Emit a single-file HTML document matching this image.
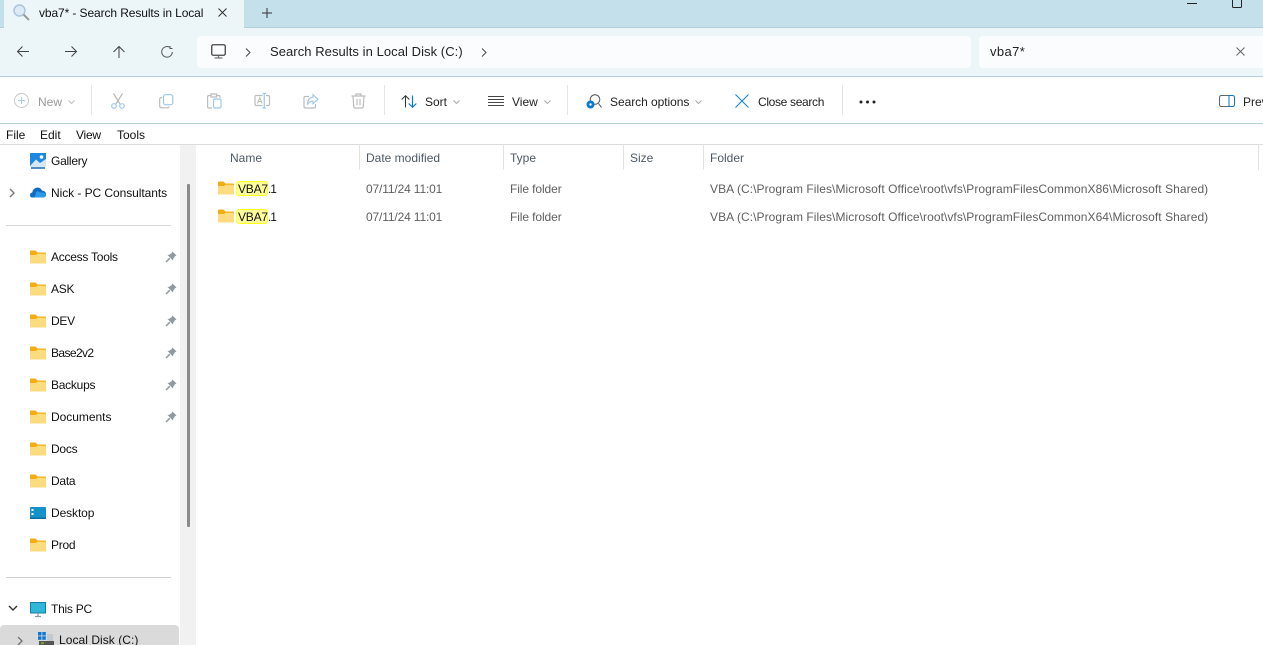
<!DOCTYPE html>
<html><head><meta charset="utf-8">
<style>
html,body{margin:0;padding:0;background:#fff;overflow:hidden}
#r{position:relative;width:1263px;height:645px;overflow:hidden;font-family:"Liberation Sans",sans-serif;font-size:12px;color:#111;background:#fff}
.a{position:absolute}
.t{position:absolute;white-space:nowrap;line-height:16px}
svg{position:absolute;overflow:visible}
.g{color:#5f5f5f}
.h{color:#4d5a66}
.l{position:absolute;background:#e3e3e3;width:1px}
.s{position:absolute;background:#e4e4e4;width:1px;height:30px;top:85px}
.hl{position:absolute;background:#fdfd9a;border:1px solid #ffff20;border-radius:3px;height:13px;width:30px}
.n{letter-spacing:-.25px}
.d{letter-spacing:-.15px}
.v{letter-spacing:-.2px}
.v span{letter-spacing:-1px}
.w{font-size:12px;letter-spacing:.065px}
</style></head><body>
<div id="r">
<svg width="0" height="0"><defs>
<symbol id="f" viewBox="0 0 16 14"><path d="M0 1.500Q0 .5 1 .5H5.500L7.500 2.500H15Q16 2.500 16 3.500V12.500Q16 13.500 15 13.500H1Q0 13.500 0 12.500Z" fill="#f2ac14"/><path d="M0 5H6L7.500 3.800H15Q16 3.800 16 4.800V12.500Q16 13.500 15 13.500H1Q0 13.500 0 12.500Z" fill="#fddc80"/></symbol>
<symbol id="p" viewBox="0 0 12 12"><path d="M7.500 .5L11.500 4.500L10 5.200L8.300 7.800L8 9.500L2.500 4L4.200 3.700L6.800 2Z" fill="#8f9aa2"/><path d="M4.800 7.200L1 11" stroke="#8f9aa2" stroke-width="1.500"/></symbol>
</defs></svg>

<div class="a" style="left:0;top:0;width:1263px;height:28px;background:#c3e0eb;border-bottom:1px solid #b0d0dc;box-sizing:border-box"></div>
<div class="a" style="left:0;top:28px;width:1263px;height:49px;background:#ecf5f8;border-bottom:1px solid #b6d0dd;box-sizing:border-box"></div>
<div class="a" style="left:4px;top:0;width:240px;height:28px;background:#ecf5f8"></div>
<svg style="left:13px;top:4px" width="17" height="17" viewBox="0 0 17 17"><circle cx="6.500" cy="6.500" r="5.500" fill="#dbeaf5" stroke="#a9c4da" stroke-width="1.400"/><path d="M10.500 10.500L16 16" stroke="#9a9a9a" stroke-width="2"/></svg>
<div class="t" style="left:39px;top:5px;letter-spacing:-.1px">vba7* - Search Results in Local</div>
<svg style="left:218px;top:8px" width="9" height="9"><path d="M.5 .5L8.500 8.500M8.500 .5L.5 8.500" stroke="#333" stroke-width="1"/></svg>
<svg style="left:262px;top:8px" width="10" height="10"><path d="M5 0V10M0 5H10" stroke="#333" stroke-width="1"/></svg>
<svg style="left:1187px;top:0" width="14" height="6"><path d="M0 3.500H10" stroke="#222" stroke-width="1"/></svg>
<svg style="left:1232px;top:0" width="11" height="8"><path d="M.5 -3H9.500V6.500Q9.500 7.500 8.500 7.500H1.500Q.5 7.500 .5 6.500Z" fill="none" stroke="#222"/></svg>

<svg style="left:17px;top:46px" width="12" height="11"><path d="M12 5.500H.5M5.500 .5L.5 5.500L5.500 10.500" fill="none" stroke="#444" stroke-width="1"/></svg>
<svg style="left:65px;top:46px" width="12" height="11"><path d="M0 5.500H11.500M6.500 .5L11.500 5.500L6.500 10.500" fill="none" stroke="#444" stroke-width="1"/></svg>
<svg style="left:113px;top:46px" width="12" height="12"><path d="M6 12V.5M.5 6L6 .5L11.500 6" fill="none" stroke="#444" stroke-width="1"/></svg>
<svg style="left:161px;top:46px" width="12" height="12"><path d="M8.500 1.200A5.300 5.300 0 1 0 11.300 6M9 0V2.500H11.500" fill="none" stroke="#555" stroke-width="1"/></svg>

<div class="a" style="left:197px;top:36px;width:774px;height:32px;background:#fafcfe;border-radius:4px"></div>
<svg style="left:211px;top:44px" width="15" height="15"><rect x=".75" y=".75" width="13.500" height="10.500" rx="1.500" fill="none" stroke="#444" stroke-width="1.300"/><path d="M7.500 11.500V13.500M3.500 14H11.500" stroke="#777" stroke-width="1.300"/></svg>
<svg style="left:245px;top:48px" width="6" height="9"><path d="M1 .5L5 4.500L1 8.500" fill="none" stroke="#444"/></svg>
<div class="t" style="left:270px;top:44px;font-size:13px;letter-spacing:.06px;color:#222">Search Results in Local Disk (C:)</div>
<svg style="left:481px;top:48px" width="6" height="9"><path d="M1 .5L5 4.500L1 8.500" fill="none" stroke="#444"/></svg>

<div class="a" style="left:979px;top:36px;width:284px;height:32px;background:#fafcfe;border-radius:4px 0 0 4px"></div>
<div class="t" style="left:990px;top:44px;font-size:13px;letter-spacing:.4px;color:#222">vba7*</div>
<svg style="left:1236px;top:47px" width="9" height="9"><path d="M.5 .5L8.500 8.500M8.500 .5L.5 8.500" stroke="#666"/></svg>

<!-- toolbar -->
<svg style="left:14px;top:93px" width="16" height="16"><circle cx="7.500" cy="7.500" r="7" fill="none" stroke="#c8c8c8"/><path d="M7.500 4V11M4 7.500H11" stroke="#a8cdec"/></svg>
<div class="t" style="left:38px;top:94px;color:#9a9a9a">New</div>
<svg style="left:68px;top:100px" width="7" height="4"><path d="M.5 .5L3.500 3.500L6.500 .5" fill="none" stroke="#c0c0c0"/></svg>
<div class="s" style="left:91px"></div>
<svg style="left:110px;top:93px" width="16" height="16"><path d="M3.500 .5L10 11M12.500 .5L6 11" stroke="#b8b8b8" fill="none" stroke-width="1.200"/><circle cx="4" cy="13" r="2.300" fill="none" stroke="#9cc8ee" stroke-width="1.200"/><circle cx="12" cy="13" r="2.300" fill="none" stroke="#9cc8ee" stroke-width="1.200"/></svg>
<svg style="left:159px;top:94px" width="15" height="15"><path d="M3 3.500H2.500Q.7 3.500 .7 5.300V12Q.7 13.800 2.500 13.800H8.500Q10 13.800 10 12.500" fill="none" stroke="#bcbcbc" stroke-width="1.200"/><rect x="4.500" y=".7" width="9.300" height="10" rx="2" fill="none" stroke="#9cc8ee" stroke-width="1.200"/></svg>
<svg style="left:207px;top:93px" width="15" height="16"><path d="M4 2.500H2Q.6 2.500 .6 4V13.500Q.6 15 2 15H5M9.500 2.500H11.500Q13 2.500 13 4V5M4 1H9.500V4H4Z" fill="none" stroke="#bcbcbc" stroke-width="1.200"/><rect x="6.500" y="6" width="7.500" height="9" rx="1.500" fill="none" stroke="#9cc8ee" stroke-width="1.200"/></svg>
<svg style="left:254px;top:93px" width="16" height="16"><path d="M8.500 2.500H2.500Q1 2.500 1 4V11Q1 12.500 2.500 12.500H8.500M12 2.500H14Q15.500 2.500 15.500 4V11Q15.500 12.500 14 12.500H12" fill="none" stroke="#bcbcbc" stroke-width="1.200"/><path d="M10.250 .5V15M8.500 .5H12M8.500 15H12" stroke="#9cc8ee" fill="none" stroke-width="1.200"/><path d="M3.500 10.500L5.800 4.500L8 10.500M4.300 8.500H7.300" fill="none" stroke="#b8b8b8"/></svg>
<svg style="left:303px;top:94px" width="16" height="15"><path d="M6 2.500H2.500Q1 2.500 1 4V12.500Q1 14 2.500 14H11Q12.500 14 12.500 12.500V10" fill="none" stroke="#bcbcbc" stroke-width="1.200"/><path d="M10 .7L15 5.200L10 9.700V7.200Q6 7.200 4.500 10.700Q4.500 3.700 10 3.200Z" fill="none" stroke="#9cc8ee" stroke-width="1.200"/></svg>
<svg style="left:351px;top:93px" width="15" height="16"><path d="M.5 3H14.500M5 3V1H10V3M2 3L2.800 14Q2.900 15 4 15H11Q12.100 15 12.200 14L13 3M6 6V12M9 6V12" fill="none" stroke="#bcbcbc" stroke-width="1.200"/></svg>
<div class="s" style="left:384px"></div>
<svg style="left:401px;top:95px" width="16" height="13"><path d="M4.500 12.500V.7M.7 4.500L4.500 .7L8.300 4.500" fill="none" stroke="#333"/><path d="M11.500 .5V12.300M7.700 8.500L11.500 12.300L15.300 8.500" fill="none" stroke="#0a78d4" stroke-width="1.200"/></svg>
<div class="t" style="left:425px;top:94px;color:#222">Sort</div>
<svg style="left:453px;top:100px" width="7" height="4"><path d="M.5 .5L3.500 3.500L6.500 .5" fill="none" stroke="#aaa"/></svg>
<svg style="left:488px;top:96px" width="16" height="11"><path d="M0 .5H16M0 3.500H16M0 6.500H16M0 9.500H16" stroke="#444"/></svg>
<div class="t" style="left:512px;top:94px;color:#222">View</div>
<svg style="left:544px;top:100px" width="7" height="4"><path d="M.5 .5L3.500 3.500L6.500 .5" fill="none" stroke="#aaa"/></svg>
<div class="s" style="left:567px"></div>
<svg style="left:586px;top:94px" width="16" height="15"><circle cx="9" cy="5.500" r="4.800" fill="none" stroke="#555"/><path d="M12.500 9.500L15.500 13.500" stroke="#555"/><circle cx="4.500" cy="10.500" r="4" fill="#0a78d4"/><circle cx="4.500" cy="10.500" r="1.200" fill="#fff"/></svg>
<div class="t" style="left:610px;top:94px;color:#222;letter-spacing:-.05px">Search options</div>
<svg style="left:695px;top:100px" width="7" height="4"><path d="M.5 .5L3.500 3.500L6.500 .5" fill="none" stroke="#aaa"/></svg>
<svg style="left:735px;top:94px" width="14" height="14"><path d="M.5 .5L13.500 13.500M13.500 .5L.5 13.500" stroke="#1a84d8" stroke-width="1.100"/></svg>
<div class="t" style="left:758px;top:94px;color:#222;letter-spacing:-.33px">Close search</div>
<div class="s" style="left:842px"></div>
<svg style="left:859px;top:100px" width="17" height="4"><circle cx="2" cy="2" r="1.500" fill="#222"/><circle cx="8.500" cy="2" r="1.500" fill="#222"/><circle cx="15" cy="2" r="1.500" fill="#222"/></svg>
<svg style="left:1219px;top:95px" width="16" height="13"><path d="M10 .5H2.500Q.5 .5 .5 2.500V9.500Q.5 11.500 2.500 11.500H10" fill="none" stroke="#666"/><path d="M10 .5V11.500M10 .5H13.500Q15.500 .5 15.500 2.500V9.500Q15.500 11.500 13.500 11.500H10" fill="none" stroke="#0a78d4"/></svg>
<div class="t" style="left:1243px;top:94px;color:#222">Preview</div>

<div class="a" style="left:0;top:123px;width:1263px;height:1px;background:#b9cfd8"></div>
<div class="t" style="left:6px;top:127px">File</div>
<div class="t" style="left:40px;top:127px">Edit</div>
<div class="t n" style="left:76px;top:127px">View</div>
<div class="t" style="left:117px;top:127px">Tools</div>
<div class="a" style="left:0;top:144px;width:1263px;height:1px;background:#dcdcdc"></div>

<!-- sidebar -->
<div class="a" style="left:180px;top:145px;width:16px;height:500px;background:#f1f1f1"></div>
<div class="a" style="left:187px;top:184px;width:3px;height:343px;background:#8a8a8a;border-radius:1px"></div>

<svg style="left:30px;top:153px" width="16" height="16"><path d="M0 0H16V13H0Z" fill="#1e88e0"/><path d="M0 13L6 6.500L10 10L16 6V14H0Z" fill="#d4e8f8"/><circle cx="11.500" cy="4" r="1.800" fill="#fff"/><path d="M1 15H15" stroke="#1569b5" stroke-width="1.500"/></svg>
<div class="t n" style="left:51px;top:153px">Gallery</div>
<svg style="left:9px;top:188px" width="7" height="10"><path d="M1 1L5 5L1 9" fill="none" stroke="#777" stroke-width="1.400"/></svg>
<svg style="left:30px;top:186px" width="16" height="12"><path d="M1.500 11.500Q0 11 0 9Q0 7 2.200 6.500Q3 2 7.500 1.500Q10.500 1.500 12 4.500Q16 5 16 8.500Q16 11.500 13 11.500Z" fill="#0f6cc4"/><path d="M6 6Q8 4.500 10 6.500Q14 6 15.500 8.500Q16 11.500 13 11.500H4Q6 9 6 6Z" fill="#2a9aea"/></svg>
<div class="t" style="left:51px;top:185px;letter-spacing:-.06px">Nick - PC Consultants</div>
<div class="a" style="left:6px;top:225px;width:165px;height:1px;background:#d8d8d8"></div>

<svg style="left:30px;top:250px" width="16" height="14"><use href="#f"/></svg><div class="t n" style="left:51px;top:249px">Access Tools</div><svg style="left:165px;top:251px" width="12" height="12"><use href="#p"/></svg>
<svg style="left:30px;top:282px" width="16" height="14"><use href="#f"/></svg><div class="t n" style="left:51px;top:281px">ASK</div><svg style="left:165px;top:283px" width="12" height="12"><use href="#p"/></svg>
<svg style="left:30px;top:314px" width="16" height="14"><use href="#f"/></svg><div class="t n" style="left:51px;top:313px">DEV</div><svg style="left:165px;top:315px" width="12" height="12"><use href="#p"/></svg>
<svg style="left:30px;top:346px" width="16" height="14"><use href="#f"/></svg><div class="t" style="left:51px;top:345px;letter-spacing:-.6px">Base2v2</div><svg style="left:165px;top:347px" width="12" height="12"><use href="#p"/></svg>
<svg style="left:30px;top:378px" width="16" height="14"><use href="#f"/></svg><div class="t n" style="left:51px;top:377px">Backups</div><svg style="left:165px;top:379px" width="12" height="12"><use href="#p"/></svg>
<svg style="left:30px;top:410px" width="16" height="14"><use href="#f"/></svg><div class="t" style="left:51px;top:409px;letter-spacing:-.03px">Documents</div><svg style="left:165px;top:411px" width="12" height="12"><use href="#p"/></svg>
<svg style="left:30px;top:442px" width="16" height="14"><use href="#f"/></svg><div class="t n" style="left:51px;top:441px">Docs</div>
<svg style="left:30px;top:474px" width="16" height="14"><use href="#f"/></svg><div class="t n" style="left:51px;top:473px">Data</div>
<svg style="left:30px;top:507px" width="16" height="12"><rect width="16" height="12" rx="1" fill="#1491c8"/><rect y="10.500" width="16" height="1.500" fill="#0b6f9c"/><rect x="1.500" y="2" width="2" height="2" fill="#fff"/><rect x="1.500" y="6" width="2" height="2" fill="#fff"/></svg>
<div class="t" style="left:51px;top:505px;letter-spacing:-.1px">Desktop</div>
<svg style="left:30px;top:538px" width="16" height="14"><use href="#f"/></svg><div class="t n" style="left:51px;top:537px">Prod</div>
<div class="a" style="left:6px;top:577px;width:165px;height:1px;background:#d0d0d0"></div>

<svg style="left:8px;top:605px" width="10" height="7"><path d="M1 1L5 5L9 1" fill="none" stroke="#333" stroke-width="1.400"/></svg>
<svg style="left:30px;top:602px" width="16" height="15"><rect x=".5" y=".5" width="15" height="10.500" fill="#2fb6d8" stroke="#157f9e"/><path d="M8 11V14M5 14.500H11" stroke="#8a9aa2" stroke-width="1.300"/></svg>
<div class="t n" style="left:51px;top:601px">This PC</div>

<div class="a" style="left:0;top:625px;width:179px;height:20px;background:#dadada;border-radius:4px 4px 0 0"></div>
<svg style="left:17px;top:636px" width="7" height="10"><path d="M1 1L5 5L1 9" fill="none" stroke="#777" stroke-width="1.400"/></svg>
<svg style="left:38px;top:632px" width="16" height="13"><rect width="3.500" height="3.500" fill="#0a78d4"/><rect x="4.300" width="3.500" height="3.500" fill="#0a78d4"/><rect y="4.300" width="3.500" height="3.500" fill="#0a78d4"/><rect x="4.300" y="4.300" width="3.500" height="3.500" fill="#0a78d4"/><rect x="9" y="2" width="6" height="7" fill="#c2c9cf"/><rect x="1" y="9" width="15" height="4" fill="#555"/><rect x="3" y="10.500" width="3" height="1.200" fill="#7ed321"/></svg>
<div class="t" style="left:59px;top:632px;letter-spacing:.05px">Local Disk (C:)</div>

<!-- header -->
<div class="t h" style="left:230px;top:150px">Name</div>
<div class="t h" style="left:366px;top:150px">Date modified</div>
<div class="t h" style="left:510px;top:150px">Type</div>
<div class="t h" style="left:630px;top:150px">Size</div>
<div class="t h" style="left:710px;top:150px">Folder</div>
<div class="l" style="left:359px;top:145px;height:25px"></div>
<div class="l" style="left:503px;top:145px;height:25px"></div>
<div class="l" style="left:623px;top:145px;height:25px"></div>
<div class="l" style="left:703px;top:145px;height:25px"></div>
<div class="l" style="left:1258px;top:145px;height:25px"></div>

<!-- rows -->
<svg style="left:218px;top:181px" width="16" height="14"><use href="#f"/></svg>
<div class="hl" style="left:236px;top:181px"></div>
<div class="t v" style="left:238px;top:181px;color:#111">VBA7<span>.1</span></div>
<div class="t g d" style="left:366px;top:181px">07/11/24 11:01</div>
<div class="t g" style="left:510px;top:181px;letter-spacing:-.1px">File folder</div>
<div class="t g w" style="left:710px;top:181px">VBA (C:\Program Files\Microsoft Office\root\vfs\ProgramFilesCommonX86\Microsoft Shared)</div>

<svg style="left:218px;top:209px" width="16" height="14"><use href="#f"/></svg>
<div class="hl" style="left:236px;top:209px"></div>
<div class="t v" style="left:238px;top:209px;color:#111">VBA7<span>.1</span></div>
<div class="t g d" style="left:366px;top:209px">07/11/24 11:01</div>
<div class="t g" style="left:510px;top:209px;letter-spacing:-.1px">File folder</div>
<div class="t g w" style="left:710px;top:209px">VBA (C:\Program Files\Microsoft Office\root\vfs\ProgramFilesCommonX64\Microsoft Shared)</div>
</div>
</body></html>
